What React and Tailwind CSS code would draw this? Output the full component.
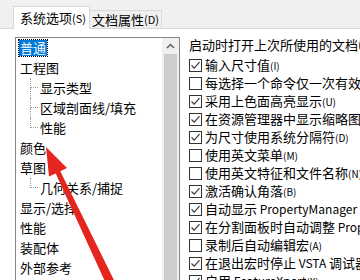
import React from "react";

const font = { fontFamily: '"Noto Sans CJK SC", "Noto Sans", sans-serif' };

const tree = [
  { label: "普通", level: 0, selected: true },
  { label: "工程图", level: 0 },
  { label: "显示类型", level: 1 },
  { label: "区域剖面线/填充", level: 1 },
  { label: "性能", level: 1, last: true },
  { label: "颜色", level: 0 },
  { label: "草图", level: 0 },
  { label: "几何关系/捕捉", level: 1, last: true },
  { label: "显示/选择", level: 0 },
  { label: "性能", level: 0 },
  { label: "装配体", level: 0 },
  { label: "外部参考", level: 0 },
];

const options = [
  { text: "输入尺寸值", key: "(I)", checked: true },
  { text: "每选择一个命令仅一次有效", key: "(S)", checked: false },
  { text: "采用上色面高亮显示", key: "(U)", checked: true },
  { text: "在资源管理器中显示缩略图", key: "(T)", checked: true },
  { text: "为尺寸使用系统分隔符", key: "(D)", checked: true },
  { text: "使用英文菜单", key: "(M)", checked: false },
  { text: "使用英文特征和文件名称", key: "(N)", checked: false },
  { text: "激活确认角落", key: "(B)", checked: true },
  { text: "自动显示", latin: " PropertyManager", checked: true },
  { text: "在分割面板时自动调整", latin: " PropertyManager 大小", checked: true },
  { text: "录制后自动编辑宏", key: "(A)", checked: false },
  { text: "在退出宏时停止", latin: " VSTA ", tail: "调试器", key: "(V)", checked: true },
  { text: "启用", latin: " FeatureXpert", key: "(X)", checked: true },
];

const Checkbox = ({ checked }) => (
  <span className="flex h-[13px] w-[13px] shrink-0 items-center justify-center border border-[#333333] bg-white">
    {checked && (
      <svg width="11" height="11" viewBox="0 0 11 11">
        <polyline points="1.5,5.5 4.2,8.2 9.5,2.2" fill="none" stroke="#333333" strokeWidth="1.1" />
      </svg>
    )}
  </span>
);

const TreeRow = ({ item }) => {
  if (item.level === 0) {
    return (
      <div className="flex h-[20px] items-center pl-[3px]">
        <span
          className={
            item.selected
              ? "bg-[#0078d7] px-[1px] text-[13px] leading-[16px] text-white outline outline-1 outline-dotted outline-[#000]"
              : "px-[1px] text-[13px] leading-[16px] text-black"
          }
        >
          {item.label}
        </span>
      </div>
    );
  }
  return (
    <div className="flex h-[20px] items-stretch pl-[14px]">
      <div className="flex w-[8px] flex-col">
        <div className="h-[10px] border-b border-l border-dotted border-[#a0a0a0]" />
        <div className={item.last ? "h-[10px]" : "h-[10px] border-l border-dotted border-[#a0a0a0]"} />
      </div>
      <span className="ml-[2px] self-center text-[13px] leading-[16px] text-black">{item.label}</span>
    </div>
  );
};

export default function App() {
  return (
    <div className="relative h-[280px] w-[360px] overflow-hidden bg-white" style={font}>
      {/* Tabs */}
      <div className="flex h-[29px] items-end bg-[#f0f0f0]">
        <div className="h-[1px] w-[13px] bg-[#d9d9d9]" />
        <div className="flex h-[23px] w-[77px] items-center border border-b-0 border-[#d9d9d9] bg-white pl-[6px] text-[13px] text-black">
          系统选项<span className="text-[11px]">(S)</span>
        </div>
        <div className="flex h-[19px] w-[72px] items-center border-r border-t border-b border-[#d9d9d9] bg-[#f0f0f0] pl-[2px] text-[13px] text-black">
          文档属性<span className="text-[11px]">(D)</span>
        </div>
        <div className="h-[1px] flex-1 bg-[#d9d9d9]" />
      </div>

      {/* Body */}
      <div className="flex items-start pl-[15px]">
        <div className="mt-[8px] flex h-[260px] w-[165px] shrink-0 border border-[#828790] bg-white">
          <div className="flex-1 overflow-hidden whitespace-nowrap">
            {tree.map((item, i) => (
              <TreeRow key={i} item={item} />
            ))}
          </div>
          <div className="flex w-[17px] flex-col bg-[#f0f0f0]">
            <div className="flex h-[16px] items-center justify-center">
              <svg width="9" height="6" viewBox="0 0 9 6">
                <polyline points="1,5 4.5,1.5 8,5" fill="none" stroke="#606060" strokeWidth="1.5" />
              </svg>
            </div>
            <div className="mx-[2px] flex-1 bg-[#cdcdcd]" />
          </div>
        </div>

        <div className="ml-[9px] flex flex-col whitespace-nowrap pt-[7px] text-[13px] text-black">
          <div className="mb-[2px] flex h-[18px] items-center">启动时打开上次所使用的文档(O):</div>
          {options.map((o, i) => (
            <div key={i} className="flex h-[18px] items-center gap-[3px]">
              <Checkbox checked={o.checked} />
              <span className="leading-[16px]">
                {o.text}
                {o.latin && <span className="text-[12px]">{o.latin}</span>}
                {o.tail}
                {o.key && <span className="text-[10px]">{o.key}</span>}
              </span>
            </div>
          ))}
        </div>
      </div>

      {/* Red annotation arrow */}
      <svg className="pointer-events-none absolute left-0 top-0" width="360" height="280" viewBox="0 0 360 280">
        <polygon
          points="46,147 67,168 60.3,171.2 117.9,288.1 109.7,291.9 55.7,173.4 49,176.6"
          fill="#e5261e"
        />
      </svg>
    </div>
  );
}
